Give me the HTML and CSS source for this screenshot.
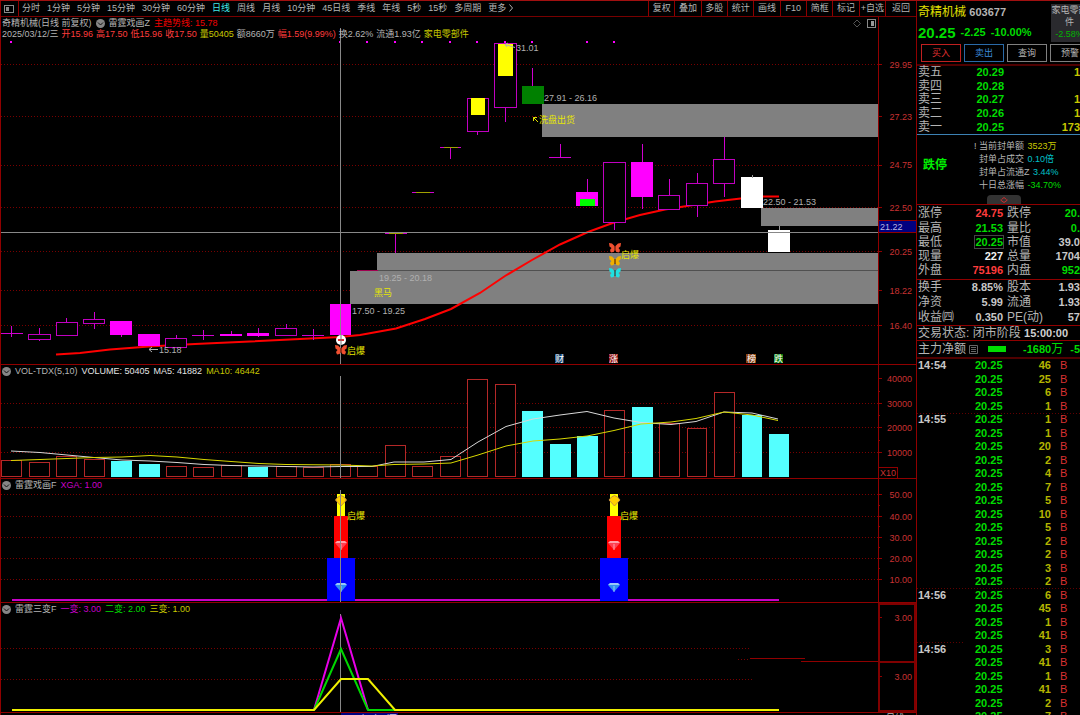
FILE: index.html
```html
<!DOCTYPE html>
<html lang="zh-CN">
<head>
    <meta charset="UTF-8" />
    <meta name="viewport" content="width=device-width, initial-scale=1" />
    <title>奇精机械 603677</title>
    <link rel="stylesheet" href="styles.css">
</head>
<body>
<div class="app">
    <main class="charts">
        <nav class="toolbar">
            <button class="layout-btn" aria-label="布局">
                <svg width="10" height="8" viewBox="0 0 10 8"><rect x="0.5" y="0.5" width="9" height="7" fill="none" stroke="#8a8a8a"/><rect x="2" y="2" width="3" height="4" fill="#8a8a8a"/></svg>
            </button>
            <div class="periods">
                <button>分时</button>
                <button>1分钟</button>
                <button>5分钟</button>
                <button>15分钟</button>
                <button>30分钟</button>
                <button>60分钟</button>
                <button class="active">日线</button>
                <button>周线</button>
                <button>月线</button>
                <button>10分钟</button>
                <button>45日线</button>
                <button>季线</button>
                <button>年线</button>
                <button>5秒</button>
                <button>15秒</button>
                <button>多周期</button>
                <button>更多 <svg width="4" height="8" viewBox="0 0 4 8"><path d="M0.5 0.5L3.5 4L0.5 7.5" fill="none" stroke="#b0b0b0"/></svg></button>
            </div>
            <div class="tools">
                <button>复权</button>
                <button>叠加</button>
                <button>多股</button>
                <button>统计</button>
                <button>画线</button>
                <button>F10</button>
                <button>简框</button>
                <button>标记</button>
                <button>+自选</button>
                <button>返回</button>
            </div>
        </nav>

        <!-- K线 -->
        <section class="panel">
            <div class="panel-head">
                <div class="line">
                    <span>奇精机械(日线 前复权)</span>
                    <svg class="fold" viewBox="0 0 9 9"><circle cx="4.5" cy="4.5" r="4.5" fill="#858585"/><path d="M2 3.5L4.5 6L7 3.5" fill="none" stroke="#111"/></svg>
                    <span>雷霆戏画Z</span>
                    <span class="red">主趋势线: 15.78</span>
                </div>
                <div class="line quote">
                    <span>2025/03/12/三</span>
                    <span class="up">开15.96</span>
                    <span class="up">高17.50</span>
                    <span class="up">低15.96</span>
                    <span class="up">收17.50</span>
                    <span class="yellow">量50405</span>
                    <span>额8660万</span>
                    <span class="up">幅1.59(9.99%)</span>
                    <span>换2.62%</span>
                    <span>流通1.93亿</span>
                    <span class="yellow">家电零部件</span>
                </div>
            </div>
            <svg class="chart" viewBox="1 17 915 347">
                <defs>
                    <g id="butterfly">
                        <path d="M0 -1.5L-3 -4.5L-6 -5L-5.5 -1.5L-3.5 0L-5 2L-4 4.5L-1.5 4L0 2L1.5 4L4 4.5L5 2L3.5 0L5.5 -1.5L6 -5L3 -4.5Z"/>
                        <path d="M0 -2V3" stroke="#401008"/>
                    </g>
                </defs>
                <g class="grid">
                    <path d="M1 64.5H878M1 116.5H878M1 165.5H878M1 207.5H878M1 251.5H878M1 290.5H878M1 325.5H878"/>
                </g>
                <g class="gap">
                    <rect x="542" y="104" width="336" height="33"/>
                    <rect x="761" y="208" width="117" height="18"/>
                    <rect x="377" y="253" width="501" height="18"/>
                    <rect x="350" y="271" width="528" height="33"/>
                    <path d="M377 270.5H878" stroke="#505050"/>
                </g>
                <path d="M357 270.5H378" stroke="#a00050"/>
                <path class="trend" d="M56 354.5L80 353L110 349.5L149 346.5L195 344L250 341.5L300 339L340 337L360 335L396 328.5L425 319L451 309L480 293L505 276L532 260L560 244.5L588 232L614 222.5L640 215L665 209.5L690 205.5L715 201.5L745 198L762 196.5H779"/>
                <g class="wick">
                    <path d="M11.5 326V337M39.5 328V334M39.5 339V341M66.5 318V322M94.5 312V319M94.5 324V329M121.5 335V337M176.5 335V338M203.5 330V340M231.5 331V336M258.5 328V337M286.5 324V328M313.5 329V340"/>
                    <path d="M395.5 234V253M450.5 147V159M477.5 132V135M505.5 107V122M532.5 68V86M560.5 144V157M587.5 179V192M614.5 223V230M642.5 144V162M642.5 197V209M669.5 179V195M697.5 173V183M697.5 206V217M724.5 137V159M724.5 184V197"/>
                    <path d="M1 333.5H23M192 335.5H214M302 335.5H324M385 233.5H407M412 192.5H434M440 147.5H461M549 157.5H571"/>
                </g>
                <path d="M389 233.5H403M416 192.5H430M444 147.5H458" stroke="#a0a000"/>
                <g class="hollow">
                    <rect x="28.5" y="334.5" width="22" height="5"/>
                    <rect x="56.5" y="322.5" width="21" height="13"/>
                    <rect x="83.5" y="319.5" width="21" height="4"/>
                    <rect x="165.5" y="338.5" width="21" height="9"/>
                    <rect x="275.5" y="328.5" width="21" height="7"/>
                    <rect x="467.5" y="98.5" width="21" height="33"/>
                    <rect x="494.5" y="43.5" width="22" height="64"/>
                    <rect x="603.5" y="162.5" width="22" height="60"/>
                    <rect x="658.5" y="195.5" width="21" height="14"/>
                    <rect x="686.5" y="183.5" width="21" height="22"/>
                    <rect x="713.5" y="159.5" width="21" height="24"/>
                </g>
                <g class="solid">
                    <rect x="110" y="321" width="22" height="14"/>
                    <rect x="138" y="334" width="22" height="12"/>
                    <rect x="220" y="334" width="22" height="2"/>
                    <rect x="247" y="333" width="22" height="3"/>
                    <rect x="330" y="304" width="21" height="31"/>
                    <rect x="576" y="192" width="22" height="14"/>
                    <rect x="631" y="162" width="22" height="35"/>
                </g>
                <g shape-rendering="crispEdges">
                    <rect x="471" y="98" width="14" height="17" fill="#ffff00"/>
                    <rect x="498" y="44" width="15" height="32" fill="#ffff00"/>
                    <rect x="522" y="86" width="22" height="18" fill="#008000"/>
                    <rect x="580" y="199" width="15" height="7" fill="#00ff00"/>
                    <rect x="741" y="177" width="22" height="31" fill="#fff"/>
                    <rect x="768" y="230" width="22" height="22" fill="#fff"/>
                    <path d="M752.5 175V178M779.5 226V230" stroke="#999"/>
                </g>
                <g class="dots">
                    <path d="M10 42h2M339 42h2M366 42h2M394 42h2M421 42h2M449 42h2M476 42h2M504 42h2M531 42h2M586 42h2M613 42h2"/>
                </g>
                <g class="note">
                    <path d="M515 47.5L505 44.5M508 43L505 44.5L507 47" fill="none" stroke="#b0b0b0"/>
                    <text x="516" y="51">31.01</text>
                    <text x="544" y="101">27.91 - 26.16</text>
                    <text x="763" y="205">22.50 - 21.53</text>
                    <text x="379" y="281">19.25 - 20.18</text>
                    <text x="352" y="314">17.50 - 19.25</text>
                    <path d="M158 349.5H149M152 347L149 349.5L152 352" fill="none" stroke="#b0b0b0"/>
                    <text x="159" y="353">15.18</text>
                </g>
                <g class="signal">
                    <path d="M538 122L533.5 117.5M533.5 121V117.5H537" fill="none" stroke="#e0e000"/>
                    <text x="539" y="123">洗盘出货</text>
                    <text x="374" y="296">黑马</text>
                    <text x="621" y="258">启爆</text>
                    <text x="347" y="354">启爆</text>
                </g>
                <g class="cross">
                    <path d="M1 232.5H878M340.5 28V364"/>
                </g>
                <circle cx="341" cy="340" r="5" fill="#fff"/>
                <path d="M338 340H344" stroke="#e03030" stroke-width="2"/>
                <path d="M341 335V345" stroke="#777"/>
                <use href="#butterfly" x="341" y="350" fill="#f05030"/>
                <use href="#butterfly" x="615" y="248" fill="#f05030"/>
                <use href="#butterfly" x="615" y="261" fill="#f0b000"/>
                <use href="#butterfly" x="615" y="273" fill="#20e0e0"/>
                <g class="badge">
                    <rect x="555" y="354" width="9" height="9" fill="#12406c"/><text x="555" y="362">财</text>
                    <rect x="609" y="354" width="9" height="9" fill="#901010"/><text x="609" y="362">涨</text>
                    <rect x="746" y="354" width="10" height="9" fill="#8a4412"/><text x="747" y="362">榜</text>
                    <rect x="774" y="354" width="9" height="9" fill="#0a7a0a"/><text x="774" y="362">跌</text>
                </g>
                <g class="axis">
                    <path d="M878.5 17V364M879 64.5H882M879 116.5H882M879 165.5H882M879 207.5H882M879 251.5H882M879 290.5H882M879 325.5H882"/>
                    <text x="912" y="68">29.95</text>
                    <text x="912" y="120">27.23</text>
                    <text x="912" y="168">24.75</text>
                    <text x="912" y="211">22.50</text>
                    <text x="912" y="255">20.25</text>
                    <text x="912" y="294">18.22</text>
                    <text x="912" y="329">16.40</text>
                    <rect x="879" y="220" width="37" height="12" fill="#000080"/>
                    <path d="M879 220.5H916M879 232.5H916"/>
                    <text class="cursor" x="880" y="230">21.22</text>
                </g>
                <path d="M853.5 23.5L857 20L860.5 23.5L857 27Z" fill="none" stroke="#555"/>
                <rect x="867.5" y="19.5" width="8" height="8" fill="none" stroke="#888"/>
                <rect x="871" y="21" width="3" height="5" fill="#999"/>
            </svg>
        </section>

        <!-- 成交量 -->
        <section class="panel">
            <div class="panel-head">
                <div class="line">
                    <svg class="fold" viewBox="0 0 9 9"><circle cx="4.5" cy="4.5" r="4.5" fill="#858585"/><path d="M2 3.5L4.5 6L7 3.5" fill="none" stroke="#111"/></svg>
                    <span>VOL-TDX(5,10)</span>
                    <span class="white">VOLUME: 50405</span>
                    <span class="white">MA5: 41882</span>
                    <span class="yellow">MA10: 46442</span>
                </div>
            </div>
            <svg class="chart" viewBox="1 365 915 113">
                <g class="grid">
                    <path d="M1 403.5H878M1 427.5H878M1 452.5H878"/>
                </g>
                <g class="vol-up">
                    <rect x="1.5" y="460.5" width="20" height="16"/>
                    <rect x="29.5" y="462.5" width="20" height="14"/>
                    <rect x="56.5" y="456.5" width="20" height="20"/>
                    <rect x="84.5" y="459.5" width="20" height="17"/>
                    <rect x="166.5" y="466.5" width="20" height="10"/>
                    <rect x="193.5" y="467.5" width="20" height="9"/>
                    <rect x="221.5" y="465.5" width="20" height="11"/>
                    <rect x="276.5" y="466.5" width="20" height="10"/>
                    <rect x="303.5" y="467.5" width="20" height="9"/>
                    <rect x="330.5" y="464.5" width="20" height="12"/>
                    <rect x="357.5" y="466.5" width="20" height="10"/>
                    <rect x="385.5" y="445.5" width="20" height="31"/>
                    <rect x="412.5" y="466.5" width="20" height="10"/>
                    <rect x="440.5" y="456.5" width="20" height="20"/>
                    <rect x="467.5" y="379.5" width="20" height="97"/>
                    <rect x="495.5" y="384.5" width="20" height="92"/>
                    <rect x="604.5" y="410.5" width="20" height="66"/>
                    <rect x="659.5" y="423.5" width="20" height="53"/>
                    <rect x="687.5" y="428.5" width="19" height="48"/>
                    <rect x="714.5" y="392.5" width="20" height="84"/>
                </g>
                <g class="vol-down">
                    <rect x="111" y="461" width="21" height="16"/>
                    <rect x="139" y="464" width="21" height="13"/>
                    <rect x="248" y="467" width="20" height="10"/>
                    <rect x="522" y="411" width="21" height="66"/>
                    <rect x="550" y="444" width="21" height="33"/>
                    <rect x="577" y="436" width="21" height="41"/>
                    <rect x="632" y="407" width="21" height="70"/>
                    <rect x="742" y="415" width="20" height="62"/>
                    <rect x="769" y="434" width="20" height="43"/>
                </g>
                <path class="ma5" d="M11 451L40 452.5L67 455L94 457.5L122 460L150 461L177 462.5L204 464.5L231 465.5L259 466L286 466.5L313 467L341 466.5H372L394 462H424L451 459.5L478 442L506 426.5L533 419L560 415L587 411.5L614 418L641 422.5L671 424.5L696 421.5L724 412L752 413L778 419"/>
                <path class="ma10" d="M11 460.5L40 459.5L67 458.5L94 457.5L122 457L150 455.5L177 457L204 459.5L231 461.5L259 463.5L286 464.5L341 465L372 466L394 464.5L424 464L451 463L478 455L506 446L533 441L560 439L587 436L614 430.5L641 424L671 422L696 418.5L724 412L752 415L778 420.5"/>
                <g class="cross"><path d="M340.5 376V478"/></g>
                <g class="axis">
                    <path d="M878.5 365V478M879 378.5H882M879 403.5H882M879 427.5H882M879 452.5H882M879 391.5H880M879 415.5H880M879 440.5H880"/>
                    <text x="912" y="382">40000</text>
                    <text x="912" y="407">30000</text>
                    <text x="912" y="431">20000</text>
                    <text x="912" y="456">10000</text>
                    <rect x="878.5" y="467.5" width="19" height="11" fill="none" stroke="#900000"/>
                    <text x="896" y="476">X10</text>
                </g>
            </svg>
        </section>

        <!-- 雷霆戏画F -->
        <section class="panel">
            <div class="panel-head">
                <div class="line">
                    <svg class="fold" viewBox="0 0 9 9"><circle cx="4.5" cy="4.5" r="4.5" fill="#858585"/><path d="M2 3.5L4.5 6L7 3.5" fill="none" stroke="#111"/></svg>
                    <span>雷霆戏画F</span>
                    <span class="magenta">XGA: 1.00</span>
                </div>
            </div>
            <svg class="chart" viewBox="1 479 915 123">
                <defs>
                    <g id="gem">
                        <path d="M-6 -2L-4 -4H4L6 -2L0 5Z"/>
                        <path d="M-4 -4H4L6 -2H-6Z" fill="#fff" fill-opacity="0.5"/>
                        <path d="M0 -1V5" stroke="#fff" stroke-opacity="0.5"/>
                    </g>
                    <g id="tower">
                        <rect x="-4" y="494" width="8" height="22" fill="#ffff00"/>
                        <rect x="-7" y="516" width="14" height="42" fill="#ff0000"/>
                        <rect x="-14" y="558" width="28" height="43" fill="#0000ff"/>
                    </g>
                </defs>
                <g class="grid">
                    <path d="M1 494.5H878M1 516.5H878M1 537.5H878M1 558.5H878M1 579.5H878"/>
                </g>
                <path d="M12 600H779" stroke="#c800c8" stroke-width="2"/>
                <use href="#tower" x="341"/>
                <use href="#tower" x="614"/>
                <g fill="#ffd000" stroke="#c89040">
                    <path d="M335.5 500L338 497L341 495.5L344 497L346.5 500L341 506Z"/>
                    <path d="M609 500L611.5 497L614.5 495.5L617.5 497L620 500L614.5 506Z"/>
                </g>
                <use href="#gem" x="341" y="545" fill="#ff4050"/>
                <use href="#gem" x="614" y="545" fill="#ff4050"/>
                <use href="#gem" x="341" y="587" fill="#3090f0"/>
                <use href="#gem" x="614" y="587" fill="#3090f0"/>
                <g class="cross"><path d="M340.5 490V602"/></g>
                <g class="signal">
                    <text x="347" y="519">启爆</text>
                    <text x="620" y="519">启爆</text>
                </g>
                <g class="axis">
                    <path d="M878.5 479V602M879 494.5H882M879 516.5H882M879 537.5H882M879 558.5H882M879 579.5H882M879 505.5H880M879 526.5H880M879 547.5H880M879 568.5H880"/>
                    <text x="912" y="498">50.00</text>
                    <text x="912" y="520">40.00</text>
                    <text x="912" y="541">30.00</text>
                    <text x="912" y="562">20.00</text>
                    <text x="912" y="583">10.00</text>
                </g>
            </svg>
        </section>

        <!-- 雷霆三变F -->
        <section class="panel">
            <div class="panel-head">
                <div class="line">
                    <svg class="fold" viewBox="0 0 9 9"><circle cx="4.5" cy="4.5" r="4.5" fill="#858585"/><path d="M2 3.5L4.5 6L7 3.5" fill="none" stroke="#111"/></svg>
                    <span>雷霆三变F</span>
                    <span class="magenta">一变: 3.00</span>
                    <span class="green">二变: 2.00</span>
                    <span class="yellow">三变: 1.00</span>
                </div>
            </div>
            <svg class="chart" viewBox="1 603 915 109">
                <g class="grid">
                    <path d="M1 648.5H751M738 659.5H750M1 679.5H752"/>
                </g>
                <path d="M750 658.5H805M801 661.5H878" stroke="#900000"/>
                <g class="cross"><path d="M340.5 614V712"/></g>
                <g class="lines">
                    <path d="M314 710L341 618L368 710" stroke="#e800e8"/>
                    <path d="M314 710L341 649L368 710H395" stroke="#00d800"/>
                    <path d="M12 710H314L341 679H368L395 710H779" stroke="#f0f000"/>
                </g>
                <g class="axis">
                    <rect x="879" y="604" width="36" height="58" fill="none" stroke="#800000" stroke-width="2"/>
                    <rect x="879" y="662" width="36" height="49" fill="none" stroke="#800000" stroke-width="2"/>
                    <path d="M880 617.5H882M880 676.5H882"/>
                    <text x="912" y="621">3.00</text>
                    <text x="912" y="680">3.00</text>
                </g>
            </svg>
        </section>
        <footer class="dates">
            <span class="date">2025/03/12/三</span>
            <span class="period">日线</span>
        </footer>
    </main>

    <aside class="side">
        <header class="stock">
            <div class="stock-info">
                <div class="name">奇精机械 <b>603677</b></div>
                <div class="price"><strong>20.25</strong><span>-2.25</span><span>-10.00%</span></div>
            </div>
            <div class="sector">家电零部件<span>-2.58%</span></div>
        </header>
        <div class="actions">
            <button class="buy">买入</button>
            <button class="sell">卖出</button>
            <button>查询</button>
            <button>预警</button>
        </div>

        <table class="asks">
            <tr><th>卖五</th><td>20.29</td><td>1</td></tr>
            <tr><th>卖四</th><td>20.28</td><td></td></tr>
            <tr><th>卖三</th><td>20.27</td><td>1</td></tr>
            <tr><th>卖二</th><td>20.26</td><td>1</td></tr>
            <tr><th>卖一</th><td>20.25</td><td>173</td></tr>
        </table>

        <div class="limit">
            <strong>跌停</strong>
            <ul>
                <li class="mark">当前封单额 <span class="yellow">3523万</span></li>
                <li>封单占成交 <span class="cyan">0.10倍</span></li>
                <li>封单占流通Z <span class="cyan">3.44%</span></li>
                <li>十日总涨幅 <span class="green">-34.70%</span></li>
            </ul>
            <button class="expand" aria-label="展开">
                <svg width="8" height="6" viewBox="0 0 8 6"><path d="M1.5 2.5L4 0.5L6.5 2.5M0.5 3L4 5.5L7.5 3" fill="none" stroke="#d03030"/></svg>
            </button>
        </div>

        <table class="stats">
            <tr><th>涨停</th><td class="up">24.75</td><th>跌停</th><td class="green">20.</td></tr>
            <tr><th>最高</th><td class="green">21.53</td><th>量比</th><td class="green">0.</td></tr>
            <tr><th>最低</th><td class="green"><span class="boxed">20.25</span></td><th>市值</th><td>39.0</td></tr>
            <tr><th>现量</th><td class="white">227</td><th>总量</th><td>1704</td></tr>
            <tr><th>外盘</th><td class="up">75196</td><th>内盘</th><td class="green">952</td></tr>
        </table>
        <table class="stats">
            <tr><th>换手</th><td>8.85%</td><th>股本</th><td>1.93</td></tr>
            <tr><th>净资</th><td>5.99</td><th>流通</th><td>1.93</td></tr>
            <tr><th>收益㈣</th><td>0.350</td><th>PE(动)</th><td>57</td></tr>
        </table>
        <div class="status">交易状态: 闭市阶段 <b>15:00:00</b></div>
        <div class="flow">
            <span>主力净额</span>
            <svg width="9" height="9" viewBox="0 0 9 9"><path d="M0.5 0.5H8.5V8.5H0.5ZM2 2.5H7M2 4.5H7M2 6.5H7" fill="none" stroke="#666"/></svg>
            <i class="flow-bar"></i>
            <span class="green"><b>-1680</b>万</span>
            <b class="green rest">-5</b>
        </div>

        <table class="ticks">
            <tr><th>14:54</th><td>20.25</td><td>46</td><td>B</td></tr>
            <tr><th></th><td>20.25</td><td>25</td><td>B</td></tr>
            <tr><th></th><td>20.25</td><td>6</td><td>B</td></tr>
            <tr><th></th><td>20.25</td><td>1</td><td>B</td></tr>
            <tr class="minute"><th>14:55</th><td>20.25</td><td>1</td><td>B</td></tr>
            <tr><th></th><td>20.25</td><td>1</td><td>B</td></tr>
            <tr><th></th><td>20.25</td><td>20</td><td>B</td></tr>
            <tr><th></th><td>20.25</td><td>2</td><td>B</td></tr>
            <tr><th></th><td>20.25</td><td>4</td><td>B</td></tr>
            <tr><th></th><td>20.25</td><td>7</td><td>B</td></tr>
            <tr><th></th><td>20.25</td><td>5</td><td>B</td></tr>
            <tr><th></th><td>20.25</td><td>10</td><td>B</td></tr>
            <tr><th></th><td>20.25</td><td>5</td><td>B</td></tr>
            <tr><th></th><td>20.25</td><td>2</td><td>B</td></tr>
            <tr><th></th><td>20.25</td><td>2</td><td>B</td></tr>
            <tr><th></th><td>20.25</td><td>3</td><td>B</td></tr>
            <tr><th></th><td>20.25</td><td>2</td><td>B</td></tr>
            <tr class="minute"><th>14:56</th><td>20.25</td><td>6</td><td>B</td></tr>
            <tr><th></th><td>20.25</td><td>45</td><td>B</td></tr>
            <tr><th></th><td>20.25</td><td>1</td><td>B</td></tr>
            <tr><th></th><td>20.25</td><td>41</td><td>B</td></tr>
            <tr class="minute half"><th>14:56</th><td>20.25</td><td>3</td><td>B</td></tr>
            <tr><th></th><td>20.25</td><td>41</td><td>B</td></tr>
            <tr><th></th><td>20.25</td><td>1</td><td>B</td></tr>
            <tr><th></th><td>20.25</td><td>41</td><td>B</td></tr>
            <tr><th></th><td>20.25</td><td>2</td><td>B</td></tr>
            <tr><th></th><td>20.25</td><td>7</td><td>B</td></tr>
        </table>
    </aside>
</div>
</body>
</html>
```
FILE: styles.css
```css
* {
    box-sizing: border-box;
}
body {
    margin: 0;
    background-color: #000;
    color: #b4b4b4;
    font-family: "Liberation Sans", "Noto Sans CJK SC", sans-serif;
    font-size: 9px;
    line-height: 11px;
}
button {
    margin: 0;
    padding: 0;
    border: none;
    background: none;
    color: inherit;
    font: inherit;
    white-space: nowrap;
    cursor: pointer;
}
table {
    width: 100%;
    border-collapse: collapse;
    table-layout: fixed;
}
th, td {
    padding: 0;
    white-space: nowrap;
}
th {
    text-align: left;
    font-weight: normal;
}
.app {
    display: grid;
    grid-template-columns: 1fr 163px;
    height: 100vh;
    overflow: hidden;
    border-top: 1px solid #a01010;
}
.red { color: #f00000; }
.up { color: #ff3c3c; }
.green { color: #00dc00; }
.yellow { color: #c8c800; }
.cyan { color: #00c0c8; }
.magenta { color: #c800c8; }
.white { color: #e4e4e4; }

/* toolbar */
.charts {
    min-width: 0;
    border-left: 1px solid #900000;
    border-right: 1px solid #900000;
}
.toolbar {
    display: flex;
    height: 16px;
    border-bottom: 1px solid #780000;
}
.layout-btn {
    width: 18px;
    padding-right: 1px;
    border-right: 1px solid #900000;
}
.layout-btn svg {
    display: block;
    margin: 0 auto;
}
.periods {
    display: flex;
    gap: 7px;
    padding-left: 3px;
}
.periods .active {
    color: #40e8e8;
}
.periods svg {
    vertical-align: -1px;
}
.tools {
    display: grid;
    grid-template-columns: repeat(9, 1fr) 31px;
    width: 268px;
    margin-left: auto;
}
.tools button {
    border-left: 1px solid #900000;
}

/* chart panels */
.panel {
    position: relative;
    border-bottom: 1px solid #900000;
}
.panel-head {
    position: absolute;
    top: 0;
    left: 1px;
}
.line {
    display: flex;
    align-items: center;
    gap: 4px;
    height: 12px;
    white-space: nowrap;
}
.quote {
    gap: 3px;
    height: 11px;
}
.fold {
    width: 9px;
    height: 9px;
}
.chart {
    display: block;
    width: 100%;
    height: auto;
}
.chart text {
    font-size: 9px;
}
.grid path {
    stroke: #780000;
    stroke-dasharray: 1 2;
    shape-rendering: crispEdges;
}
.gap {
    fill: #808080;
    shape-rendering: crispEdges;
}
.trend {
    fill: none;
    stroke: #ff0000;
    stroke-width: 2;
}
.wick path {
    stroke: #d000d0;
    shape-rendering: crispEdges;
}
.hollow rect {
    fill: #000;
    stroke: #c000c0;
    shape-rendering: crispEdges;
}
.solid {
    fill: #ff00ff;
    shape-rendering: crispEdges;
}
.dots path {
    stroke: #ff00ff;
    stroke-width: 2;
}
.note {
    fill: #b0b0b0;
}
.signal {
    fill: #e8e800;
}
.badge {
    fill: #fff;
}
.cross path {
    stroke: #888;
}
.lines {
    fill: none;
    stroke-width: 2;
}
.axis path {
    stroke: #900000;
}
.axis text {
    fill: #c83232;
    text-anchor: end;
}
.axis .cursor {
    fill: #b8b8e0;
    text-anchor: start;
}
.vol-up rect {
    fill: #000;
    stroke: #b42828;
    shape-rendering: crispEdges;
}
.vol-down {
    fill: #54ffff;
    shape-rendering: crispEdges;
}
.ma5, .ma10 {
    fill: none;
    stroke: #d8d8d8;
}
.ma10 {
    stroke: #d8d800;
}
.dates {
    display: flex;
    justify-content: space-between;
    padding: 0 12px 0 340px;
}
.date {
    background-color: #000080;
    color: #c8c8e8;
}

/* quote side */
.side {
    overflow: hidden;
    font-size: 12px;
}
.side b {
    font-size: 11px;
}
.stock {
    display: flex;
    height: 41px;
}
.stock-info {
    flex: none;
    width: 134px;
    padding: 4px 0 0 1px;
}
.name {
    line-height: 14px;
    color: #e0e000;
}
.name b {
    color: #b4b4b4;
}
.price {
    display: flex;
    align-items: center;
    gap: 5px;
    height: 26px;
    color: #00dc00;
    font-size: 11px;
    font-weight: bold;
}
.price strong {
    font-size: 15px;
}
.sector {
    flex: none;
    width: 37px;
    margin-top: 3px;
    background-color: #2a2a2e;
    font-size: 9px;
    line-height: 12px;
    text-align: center;
}
.sector span {
    display: block;
    color: #00b400;
}
.actions {
    display: flex;
    gap: 3px;
    padding: 2px 0 2px 4px;
    border-bottom: 2px solid #500000;
}
.actions button {
    flex: none;
    width: 40px;
    height: 18px;
    border: 1px solid #808080;
    font-size: 9px;
}
.actions .buy {
    border-color: #c02020;
    color: #e03030;
}
.actions .sell {
    border-color: #2a6aa8;
    color: #3c8cdc;
}
.asks {
    height: 68px;
    color: #c8c800;
    font-size: 11px;
    font-weight: bold;
    text-align: right;
}
.asks th, .stats th {
    width: 42px;
    padding-left: 1px;
    color: #b4b4b4;
    font-size: 12px;
    font-weight: normal;
}
.asks td:nth-child(2) {
    width: 45px;
    color: #00dc00;
}
.limit {
    position: relative;
    display: flex;
    align-items: center;
    height: 71px;
    padding: 0 0 8px 6px;
    border-top: 1px solid #3c82b4;
    border-bottom: 1px solid #900000;
}
.limit strong {
    width: 56px;
    color: #00f000;
}
.limit ul {
    margin: 0;
    padding: 0;
    list-style: none;
    font-size: 9px;
    line-height: 13px;
    white-space: nowrap;
}
.limit li span {
    margin-left: 1px;
}
.mark::before {
    content: "!";
    float: left;
    margin-left: -5px;
}
.expand {
    position: absolute;
    bottom: 0;
    left: 70px;
    width: 34px;
    height: 9px;
    border-radius: 4px 4px 0 0;
    background-color: #333;
}
.expand svg {
    display: block;
    margin: 0 auto;
}
.stats {
    border-bottom: 1px solid #900000;
    color: #c8c8c8;
    font-size: 11px;
    font-weight: bold;
    text-align: right;
}
.stats tr {
    height: 14px;
}
.stats tr:first-child,
.stats tr:last-child {
    height: 16px;
}
.stats td {
    width: 44px;
}
.stats td + th {
    width: 48px;
    padding-left: 4px;
}
.stats td:last-child {
    width: auto;
}
.stats .green { color: #00dc00; }
.stats .up { color: #ff3c3c; }
.stats .white { color: #f0f0f0; }
.boxed {
    outline: 1px solid #444;
}
.status {
    height: 15px;
    padding-left: 1px;
    border-bottom: 1px solid #900000;
    line-height: 14px;
    white-space: nowrap;
}
.status b {
    color: #d0d0d0;
}
.flow {
    display: flex;
    align-items: center;
    height: 18px;
    padding-left: 1px;
    border-bottom: 2px solid #500000;
    white-space: nowrap;
}
.flow svg {
    margin-left: 3px;
}
.flow-bar {
    width: 18px;
    height: 6px;
    margin: 0 17px 0 10px;
    background-color: #00dc00;
}
.flow .rest {
    margin-left: auto;
}
.ticks {
    font-size: 11px;
    font-weight: bold;
}
.ticks tr {
    height: 13px;
}
.ticks tr:nth-child(even) {
    height: 14px;
}
.ticks th {
    width: 58px;
    padding-left: 1px;
    color: #c8c8c8;
    font-weight: bold;
}
.ticks td {
    width: 28px;
    color: #00dc00;
}
.ticks td:nth-child(3) {
    width: 48px;
    color: #b4b400;
    text-align: right;
}
.ticks td:nth-child(4) {
    width: auto;
    padding-left: 9px;
    color: #d83030;
    font-weight: normal;
}
.minute {
    background: repeating-linear-gradient(90deg, #600000 0 1px, transparent 1px 3px) top left / 100% 1px no-repeat;
}
.minute.half {
    background-size: 46px 1px;
}
```
